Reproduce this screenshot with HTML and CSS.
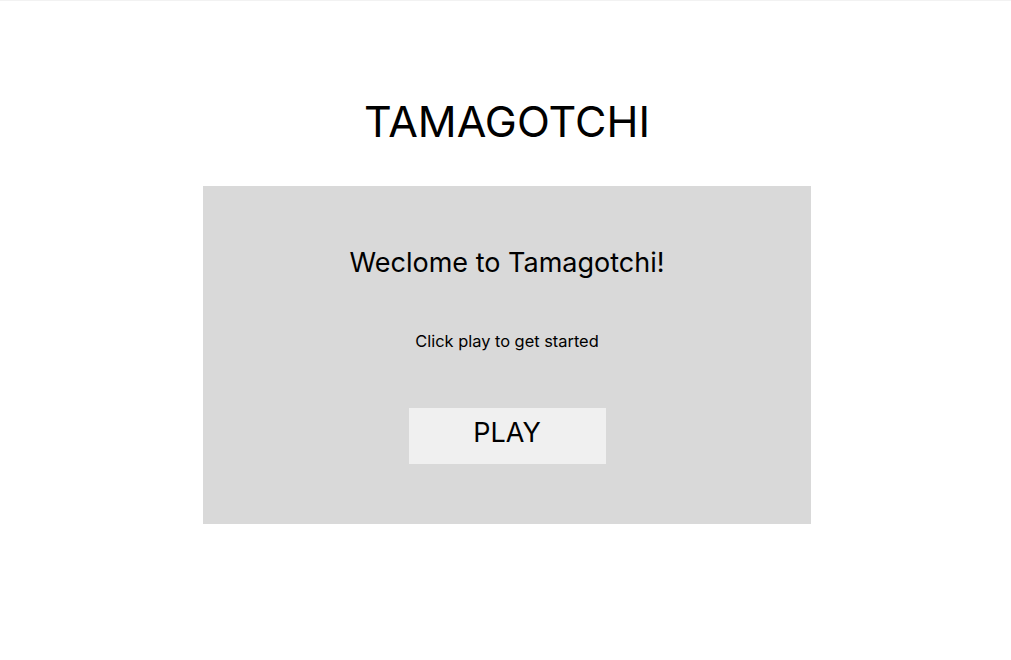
FILE: index.html
```html
<!DOCTYPE html>
<html>
<head>
<meta charset="utf-8">
<link rel="stylesheet" href="styles.css">
</head>
<body>
<div class="page">
  <h1 class="title">TAMAGOTCHI</h1>
  <section class="panel">
    <h2 class="welcome">Weclome to Tamagotchi!</h2>
    <p class="hint">Click play to get started</p>
    <button class="play">PLAY</button>
  </section>
</div>
</body>
</html>
```
FILE: styles.css
```css
html, body {
  margin: 0;
  padding: 0;
  background: #ffffff;
}
body {
  font-family: Inter, "Noto Sans", sans-serif;
  color: #000;
  border-top: 1px solid #f2f2f2;
  height: 659px;
}
.page {
  display: flex;
  flex-direction: column;
  align-items: center;
  padding-top: 91px;
  padding-left: 3px;
}
.title {
  margin: 0;
  font-size: 43px;
  font-weight: 400;
  line-height: 58px;
}
.panel {
  margin-top: 36px;
  width: 608px;
  height: 338px;
  background: #d9d9d9;
  display: flex;
  flex-direction: column;
  align-items: center;
  box-sizing: border-box;
  padding-top: 60px;
}
.welcome {
  margin: 0;
  font-size: 27px;
  font-weight: 400;
  line-height: 34px;
}
.hint {
  margin: 51px 0 0;
  font-size: 16.4px;
  line-height: 20px;
}
.play {
  margin-top: 57px;
  width: 197px;
  height: 56px;
  border: none;
  background: #f0f0f0;
  font-family: Inter, "Noto Sans", sans-serif;
  font-size: 27px;
  color: #000;
  padding: 0 0 7px;
  cursor: pointer;
}
```
